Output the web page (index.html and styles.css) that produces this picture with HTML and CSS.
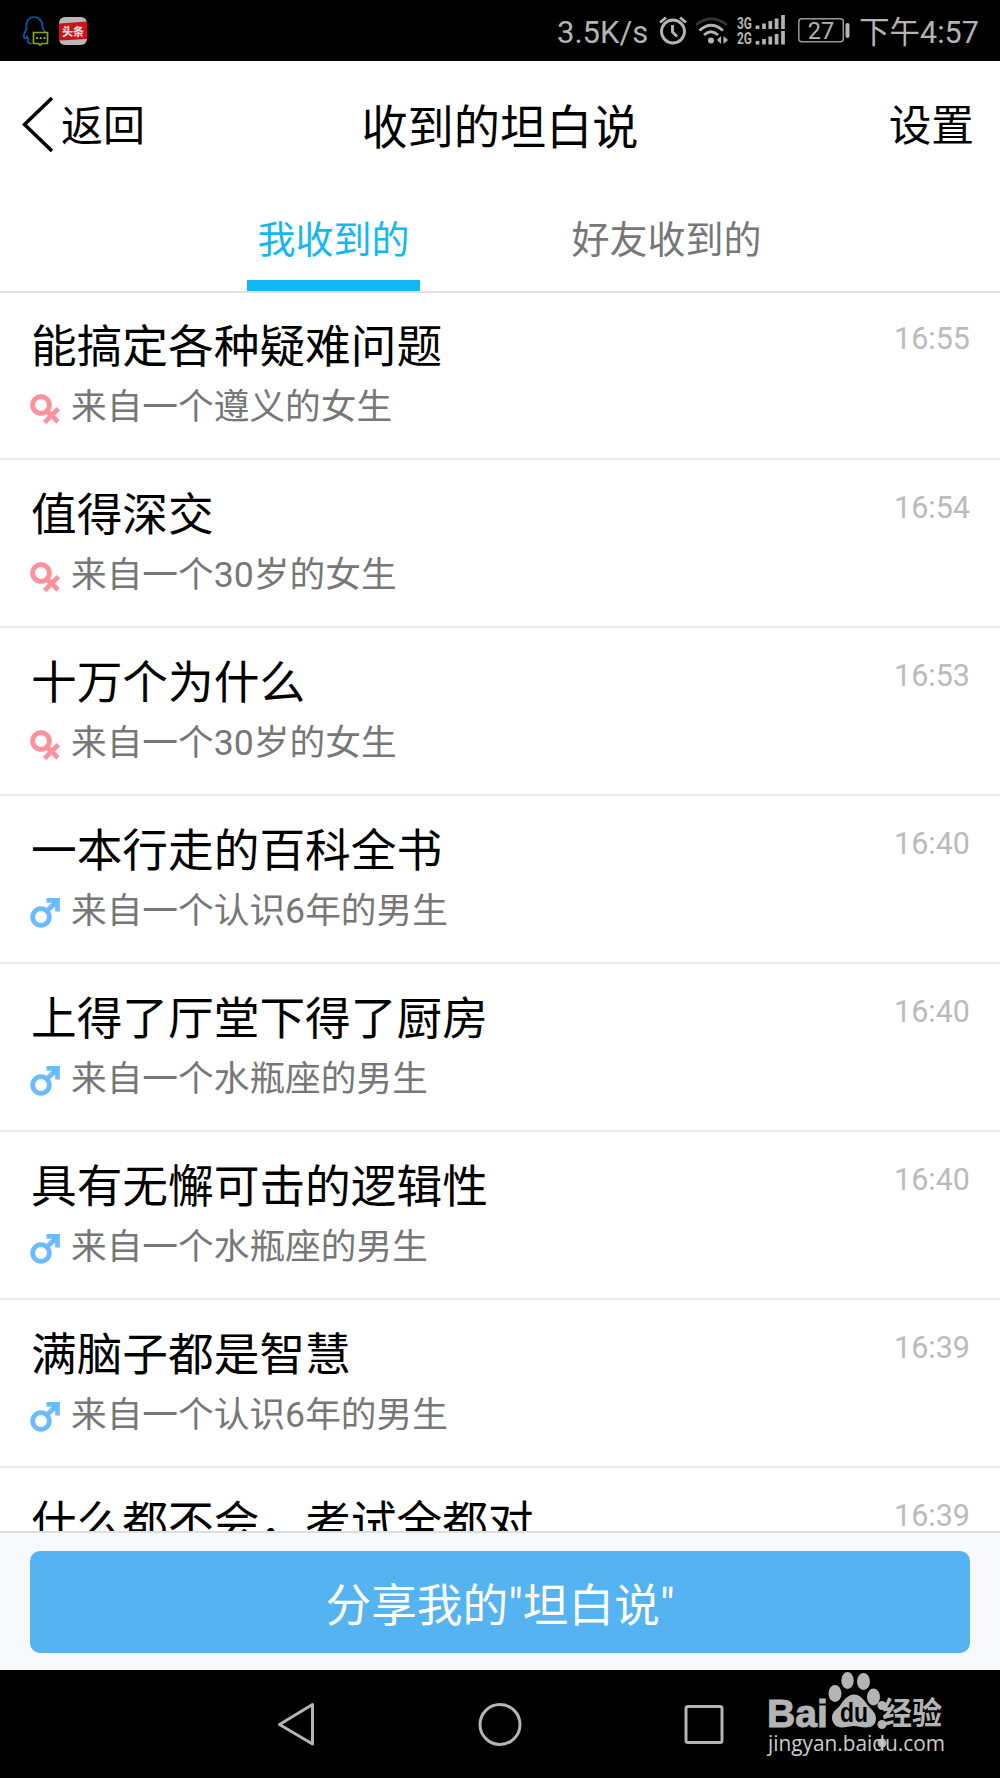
FILE: index.html
```html
<!DOCTYPE html>
<html lang="zh-CN">
<head>
<meta charset="utf-8">
<title>收到的坦白说</title>
<link rel="stylesheet" href="styles.css">
</head>
<body>
<svg class="defs" aria-hidden="true">
  <symbol id="female" viewBox="0 0 30 30"><g fill="none" stroke="#ff919d" stroke-width="4.8"><circle cx="11" cy="11" r="8.4"/><path d="M17 17l11 11M28.400 14.600L14.600 28.400"/></g></symbol>
  <symbol id="male" viewBox="0 0 30 30"><g fill="none" stroke="#6bbcff" stroke-width="4.700"><circle cx="11" cy="19" r="8.400"/><path d="M17 13L27 3M16.500 2.400H27.500V13.500"/></g></symbol>
</svg>
<header class="status">
  <svg class="qq" width="28" height="30" viewBox="0 0 28 30" fill="none" stroke-width="1.700"><path stroke="#0a58a8" d="M10 27.500C5 28 5 25 6.500 23.500L5 20.500C3 24 1 22 2 18L4.500 13C3.500 5 7 1 12 1s9 4 8.500 11L23 16"/><path stroke="#86a820" d="M11.500 16.500h14v11h-5.500l-2 1.700-1.500-1.700h-5z"/><path stroke="#86a820" stroke-width="2" stroke-dasharray="2 1.700" d="M14 22h10"/></svg>
  <svg class="toutiao" width="28" height="28" viewBox="0 0 28 28"><rect width="28" height="28" rx="6" fill="#b8b8b8"/><path fill="#d0101a" d="M0 6.500L28 4.500V22L0 23.500z"/><text x="14" y="18.500" text-anchor="middle" class="toutiao-text">头条</text></svg>
  <span class="speed">3.5K/s</span>
  <svg class="alarm" width="28" height="29" viewBox="0 0 28 29" fill="none" stroke="#b4b4b4" stroke-width="2.900"><circle cx="14" cy="15.500" r="11.500"/><path d="M13.500 9v7l4.500 4.500M1 6.500L7 1.500M21 1.500l6 5"/></svg>
  <svg class="wifi" width="33" height="28" viewBox="0 0 33 28" fill="none" stroke-width="2.800"><path stroke="#333" d="M1 8Q16 -4.500 32 8"/><path stroke="#b4b4b4" d="M4.500 13.500Q16 3 28 13.500M9 18Q16 11.500 23 18"/><circle cx="16" cy="23.500" r="3" fill="#b4b4b4"/><path fill="#b4b4b4" d="M26 19v8l-4-4zM28.500 19v8l4.500-4z"/></svg>
  <svg class="signal" width="49" height="31" viewBox="0 0 49 31"><text x="0" y="13.500" textLength="15" lengthAdjust="spacingAndGlyphs">3G</text><text x="0" y="29" textLength="15" lengthAdjust="spacingAndGlyphs">2G</text><path fill="none" stroke="#b4b4b4" stroke-width="3.700" d="M20.500 14V10.500M27 14V8.500M33.300 14V6M39.600 14V3.500M46 14V0M20.500 29.500V26M27 29.500V24M33.300 29.500V21.500M39.600 29.500V19M46 29.500V16"/></svg>
  <svg class="battery" width="52" height="25" viewBox="0 0 52 25"><rect x=".8" y=".8" width="44.500" height="23" rx="3" fill="none" stroke="#999" stroke-width="1.500"/><rect x="47.500" y="5" width="4" height="15" rx="2" fill="#b4b4b4"/><text x="23" y="20.500" text-anchor="middle">27</text></svg>
  <span class="clock">下午4:57</span>
</header>
<nav class="titlebar">
  <div class="back"><svg width="31" height="55" viewBox="0 0 31 55"><path d="M30 1L2.500 27.500L30 54" fill="none" stroke="#000" stroke-width="3.600"/></svg><span>返回</span></div>
  <h1>收到的坦白说</h1>
  <span class="settings">设置</span>
</nav>
<div class="tabs"><span class="tab active">我收到的</span><span class="tab">好友收到的</span></div>
<main class="list">
  <article><div><h2>能搞定各种疑难问题</h2><p><svg><use href="#female"/></svg>来自一个遵义的女生</p></div><time>16:55</time></article>
  <article><div><h2>值得深交</h2><p><svg><use href="#female"/></svg>来自一个30岁的女生</p></div><time>16:54</time></article>
  <article><div><h2>十万个为什么</h2><p><svg><use href="#female"/></svg>来自一个30岁的女生</p></div><time>16:53</time></article>
  <article><div><h2>一本行走的百科全书</h2><p><svg><use href="#male"/></svg>来自一个认识6年的男生</p></div><time>16:40</time></article>
  <article><div><h2>上得了厅堂下得了厨房</h2><p><svg><use href="#male"/></svg>来自一个水瓶座的男生</p></div><time>16:40</time></article>
  <article><div><h2>具有无懈可击的逻辑性</h2><p><svg><use href="#male"/></svg>来自一个水瓶座的男生</p></div><time>16:40</time></article>
  <article><div><h2>满脑子都是智慧</h2><p><svg><use href="#male"/></svg>来自一个认识6年的男生</p></div><time>16:39</time></article>
  <article><div><h2>什么都不会，考试全都对</h2></div><time>16:39</time></article>
</main>
<div class="share"><button type="button">分享我的"坦白说"</button></div>
<footer class="navbar">
  <svg width="1000" height="108" viewBox="0 0 1000 108">
    <g fill="none" stroke="#b4b4b4" stroke-width="3" stroke-linejoin="round"><path d="M312.500 34.500V74L279.500 54.500z"/><circle cx="500" cy="54.500" r="20"/><rect x="686" y="36.500" width="36" height="36" rx="2"/></g>
    <g fill="#b4b4b4">
      <text class="bai" x="767" y="56.500" textLength="61" lengthAdjust="spacingAndGlyphs">Bai</text>
      <ellipse cx="835" cy="23.500" rx="6.500" ry="8.500"/><ellipse cx="847.500" cy="10.500" rx="6.200" ry="8.500"/><ellipse cx="863.500" cy="11.500" rx="6.500" ry="8.500"/><ellipse cx="873.500" cy="27" rx="6.500" ry="8.500"/>
      <path d="M854 24.500c7 0 10 6 14 11s8 7 8 13-4 9-10 9c-5 0-8-1.500-12-1.500s-8 1.500-12 1.500c-6 0-10-4-10-10s5-8 8-12 7-11 14-11z"/>
      <text class="du" x="840" y="52" textLength="28" lengthAdjust="spacingAndGlyphs">du</text>
      <text class="jy" x="882" y="54" textLength="60" lengthAdjust="spacingAndGlyphs">经验</text>
      <circle cx="882" cy="35.500" r="4.500"/><circle cx="882" cy="54.500" r="4.500"/><circle cx="882" cy="73" r="4.500"/>
      <text class="url" x="768" y="80.500" textLength="177" lengthAdjust="spacingAndGlyphs">jingyan.baidu.com</text>
    </g>
  </svg>
</footer>
</body>
</html>
```
FILE: styles.css
```css
* { box-sizing: border-box; }
body {
  margin: 0;
  width: 1000px;
  height: 1778px;
  display: flex;
  flex-direction: column;
  overflow: hidden;
  background: #fff;
  color: #000;
  font-family: Roboto, "Noto Sans CJK SC", sans-serif;
}
.defs { display: none; }
h1, h2, p { margin: 0; font-weight: 400; }
.status {
  flex: none;
  height: 61px;
  padding: 0 22px 0 22px;
  display: flex;
  align-items: center;
  background: #000;
  color: #b4b4b4;
  font-size: 31px;
  line-height: 61px;
  white-space: nowrap;
}
.status svg { flex: none; }
.qq { margin-right: 9px; }
.toutiao-text { font-size: 11px; font-weight: 900; fill: #ddd; }
.speed { margin-left: auto; width: 91px; padding-top: 3px; }
.alarm { margin-left: 11px; }
.wifi { margin-left: 8px; }
.signal { margin-left: 9px; overflow: visible; }
.signal text { font: 700 17px Roboto, sans-serif; fill: #b4b4b4; }
.battery { margin-left: 12px; }
.battery text { font: 23.500px Roboto, sans-serif; fill: #b4b4b4; }
.clock { margin-left: 9px; width: 119px; padding-top: 3px; font-size: 30.500px; }
.titlebar {
  flex: none;
  height: 129px;
  padding: 0 25px 0 22px;
  display: grid;
  grid-template-columns: 1fr auto 1fr;
  align-items: center;
}
.back { display: flex; align-items: center; gap: 8px; font-size: 42px; padding-bottom: 3px; }
.back span { padding-bottom: 4px; }
.titlebar h1 { font-size: 46.200px; padding: 0 0 5px 3px; }
.settings { justify-self: end; font-size: 42.700px; padding: 0 1px 8px 0; }
.tabs {
  flex: none;
  height: 103px;
  padding-left: 247px;
  display: flex;
  gap: 141px;
  border-bottom: 2px solid #e0e0e0;
  color: #777;
  font-size: 38px;
  line-height: 101px;
}
.tab { padding: 0 10.500px; height: 101px; }
.tab.active { color: #12b7f5; border-bottom: 11px solid #12b7f5; }
.list { flex: none; height: 1238px; overflow: hidden; }
article {
  height: 168px;
  padding: 26px 30px 0 31px;
  display: flex;
  justify-content: space-between;
  border-bottom: 2px solid #e8e8e8;
}
article:first-child { height: 167px; padding-top: 25px; }
h2 { font-size: 45.700px; line-height: 54px; padding-top: 3px; }
p { display: flex; align-items: center; gap: 11px; color: #777; font-size: 35.700px; line-height: 42px; margin-top: 11px; }
p svg { width: 30px; height: 30px; margin: 3px 0 0 -1px; }
time { color: #bbb; font-size: 30.500px; line-height: 42px; padding-top: 1px; }
article:first-child time { padding-top: 0; }
.share {
  flex: none;
  height: 139px;
  padding: 18px 30px;
  border-top: 2px solid #dcdfe1;
  background: #f7f9fc;
}
button {
  display: block;
  width: 940px;
  height: 102px;
  padding: 10px 0 0;
  border: 0;
  border-radius: 10px;
  background: #54b3f0;
  color: #fff;
  font: 45.700px/92px Roboto, "Noto Sans CJK SC", sans-serif;
}
.navbar { flex: none; height: 108px; background: #000; }
.navbar svg { display: block; }
.bai { font: 700 39px "Liberation Sans", sans-serif; stroke: #b4b4b4; stroke-width: 1px; }
.du { font: 700 27px "Liberation Sans", sans-serif; fill: #000; }
.jy { font: 700 31px "Noto Sans CJK SC", sans-serif; }
.url { font: 22px "Open Sans", sans-serif; fill: #ccc; }
```
